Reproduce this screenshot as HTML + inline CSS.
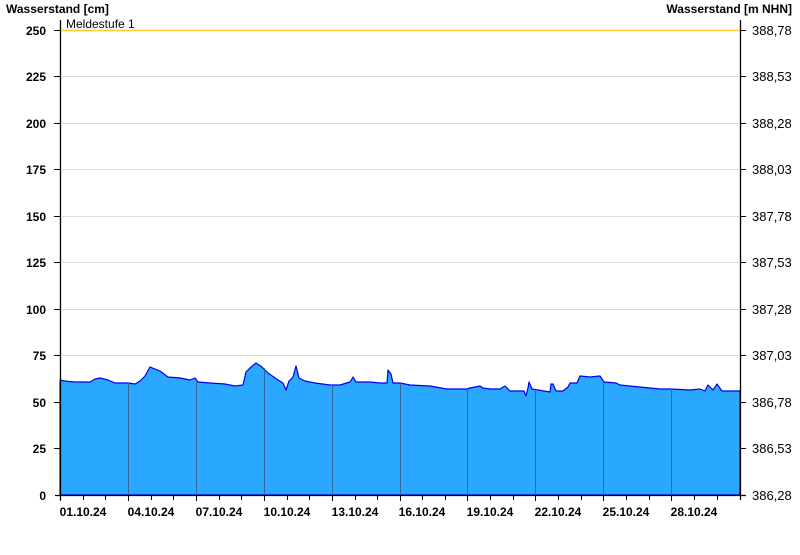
<!DOCTYPE html>
<html><head><meta charset="utf-8"><style>
body{margin:0;background:#fff;width:800px;height:550px;overflow:hidden}
svg text{font-family:"Liberation Sans",Arial,sans-serif;font-size:12px;font-weight:bold;fill:#000}
</style></head><body>
<svg width="800" height="550" xmlns="http://www.w3.org/2000/svg">
<g stroke="#dcdcdc" stroke-width="1">
<line x1="60" x2="740" y1="76.5" y2="76.5"/><line x1="60" x2="740" y1="123.5" y2="123.5"/>
<line x1="60" x2="740" y1="169.5" y2="169.5"/><line x1="60" x2="740" y1="216.5" y2="216.5"/>
<line x1="60" x2="740" y1="262.5" y2="262.5"/><line x1="60" x2="740" y1="309.5" y2="309.5"/>
<line x1="60" x2="740" y1="355.5" y2="355.5"/><line x1="60" x2="740" y1="402.5" y2="402.5"/>
<line x1="60" x2="740" y1="448.5" y2="448.5"/>
</g>
<line x1="60" x2="740" y1="30.5" y2="30.5" stroke="#ffcc33" stroke-width="1.5"/>
<text x="66" y="28" style="font-weight:normal">Meldestufe 1</text>
<polygon fill="#2aa8ff" stroke="#0000ee" stroke-width="1.2" stroke-linejoin="round" points="60,495 60,380 64,381 75,382 90,382 95,379 100,378 108,380 115,383 128,383 135,384 140,381 145,376 150,367 155,369 160,371 168,377 180,378 190,380 195,378 198,382 210,383 225,384 235,386 243,385 246,372 250,368 256,363 262,367 268,373 278,380 283,383 286,390 289,381 293,377 296,366 299,378 305,381 315,383 330,385 340,385 350,382 353,377 356,382 370,382 380,383 387,383 388,370 391,374 393,383 400,383 410,385 430,386 447,389 467,389 470,388 480,386 483,388 490,389 500,389 505,386 510,391 524,391 526,396 528,388 529,382 532,389 538,390 550,392 551,384 553,384 556,391 563,391 568,387 570,383 577,383 580,376 590,377 600,376 604,382 616,383 620,385 640,387 660,389 670,389 690,390 700,389 705,391 708,385 713,390 717,384 722,391 740,391 740,495"/>
<g stroke="#336699" stroke-width="1">
<line x1="128.5" x2="128.5" y1="383" y2="495"/><line x1="196.5" x2="196.5" y1="382" y2="495"/>
<line x1="264.5" x2="264.5" y1="368" y2="495"/><line x1="332.5" x2="332.5" y1="385" y2="495"/>
<line x1="400.5" x2="400.5" y1="383" y2="495"/><line x1="467.5" x2="467.5" y1="389" y2="495"/>
<line x1="535.5" x2="535.5" y1="391" y2="495"/><line x1="603.5" x2="603.5" y1="382" y2="495"/>
<line x1="671.5" x2="671.5" y1="389" y2="495"/>
</g>
<g stroke="#000" stroke-width="1.3">
<line x1="60.5" x2="60.5" y1="20" y2="500"/><line x1="740.5" x2="740.5" y1="20" y2="500"/>
<line x1="55" x2="746" y1="495.5" y2="495.5"/>
</g>
<g stroke="#000" stroke-width="1">
<path d="M54 30.5h6M54 76.5h6M54 123.5h6M54 169.5h6M54 216.5h6M54 262.5h6M54 309.5h6M54 355.5h6M54 402.5h6M54 448.5h6"/>
<path d="M740 30.5h6M740 76.5h6M740 123.5h6M740 169.5h6M740 216.5h6M740 262.5h6M740 309.5h6M740 355.5h6M740 402.5h6M740 448.5h6"/>
<path d="M83.5 495v5M105.5 495v5M128.5 495v6M151.5 495v5M173.5 495v5M196.5 495v6M219.5 495v5M241.5 495v5M264.5 495v6M287.5 495v5M309.5 495v5M332.5 495v6M355.5 495v5M377.5 495v5M400.5 495v6M422.5 495v5M445.5 495v5M467.5 495v6M490.5 495v5M513.5 495v5M535.5 495v6M558.5 495v5M581.5 495v5M603.5 495v6M626.5 495v5M649.5 495v5M671.5 495v6M694.5 495v5M717.5 495v5M60.5 495v6"/>
</g>
<text x="6" y="13">Wasserstand [cm]</text>
<text x="792" y="13" text-anchor="end">Wasserstand [m NHN]</text>
<g text-anchor="end">
<text x="46" y="35">250</text><text x="46" y="81">225</text><text x="46" y="128">200</text><text x="46" y="174">175</text><text x="46" y="221">150</text><text x="46" y="267">125</text><text x="46" y="314">100</text><text x="46" y="360">75</text><text x="46" y="407">50</text><text x="46" y="453">25</text><text x="46" y="500">0</text>
</g>
<g style="font-weight:normal;font-size:13px">
<text x="752" y="35" style="font-size:13px;font-weight:normal">388,78</text><text x="752" y="81" style="font-size:13px;font-weight:normal">388,53</text><text x="752" y="128" style="font-size:13px;font-weight:normal">388,28</text><text x="752" y="174" style="font-size:13px;font-weight:normal">388,03</text><text x="752" y="221" style="font-size:13px;font-weight:normal">387,78</text><text x="752" y="267" style="font-size:13px;font-weight:normal">387,53</text><text x="752" y="314" style="font-size:13px;font-weight:normal">387,28</text><text x="752" y="360" style="font-size:13px;font-weight:normal">387,03</text><text x="752" y="407" style="font-size:13px;font-weight:normal">386,78</text><text x="752" y="453" style="font-size:13px;font-weight:normal">386,53</text><text x="752" y="500" style="font-size:13px;font-weight:normal">386,28</text>
</g>
<g text-anchor="middle">
<text x="83" y="516">01.10.24</text><text x="151" y="516">04.10.24</text><text x="219" y="516">07.10.24</text><text x="287" y="516">10.10.24</text><text x="355" y="516">13.10.24</text><text x="422" y="516">16.10.24</text><text x="490" y="516">19.10.24</text><text x="558" y="516">22.10.24</text><text x="626" y="516">25.10.24</text><text x="694" y="516">28.10.24</text>
</g>
</svg>
</body></html>
